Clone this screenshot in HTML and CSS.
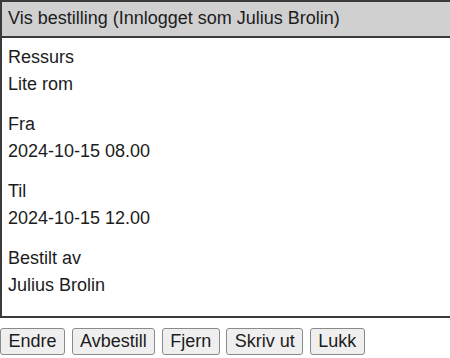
FILE: index.html
```html
<!DOCTYPE html>
<html lang="no">
<head>
    <meta charset="UTF-8">
    <title>Vis bestilling</title>
    <link rel="stylesheet" href="styles.css">
</head>
<body>
    <!-- Booking panel -->
    <div class="panel">
        <div class="panel-header">Vis bestilling (Innlogget som Julius Brolin)</div>
        <div class="panel-body">
            <div class="field">
                <div class="label">Ressurs</div>
                <div class="value">Lite rom</div>
            </div>
            <div class="field">
                <div class="label">Fra</div>
                <div class="value">2024-10-15 08.00</div>
            </div>
            <div class="field">
                <div class="label">Til</div>
                <div class="value">2024-10-15 12.00</div>
            </div>
            <div class="field">
                <div class="label">Bestilt av</div>
                <div class="value">Julius Brolin</div>
            </div>
        </div>
    </div>

    <!-- Actions -->
    <div class="actions">
        <button>Endre</button>
        <button>Avbestill</button>
        <button>Fjern</button>
        <button>Skriv ut</button>
        <button>Lukk</button>
    </div>
</body>
</html>
```

FILE: styles.css
```css
* {
    box-sizing: border-box;
    margin: 0;
    padding: 0;
}

body {
    font-family: "Liberation Sans", Arial, sans-serif;
    font-size: 18px;
    color: #1c1c1c;
    background-color: #fff;
}

/* Panel */
.panel {
    width: 460px;
    border: 2px solid #3a3a3a;
}

.panel-header {
    background-color: #d0d0d0;
    border-bottom: 2px solid #3a3a3a;
    padding: 5px 6px;
    height: 36px;
    line-height: 22px;
}

.panel-body {
    padding: 6px 6px 17px;
}

.field {
    margin-bottom: 13px;
}

.field:last-child {
    margin-bottom: 0;
}

.label,
.value {
    line-height: 27px;
}

/* Buttons */
.actions {
    display: flex;
    gap: 6.5px;
    margin-top: 10px;
}

.actions button {
    font-family: "Liberation Sans", Arial, sans-serif;
    font-size: 18px;
    color: #1c1c1c;
    background-color: #efefef;
    border: 1px solid #8a8a8a;
    border-radius: 3px;
    padding: 1px 7.5px;
    height: 27px;
    line-height: 23px;
}
```
